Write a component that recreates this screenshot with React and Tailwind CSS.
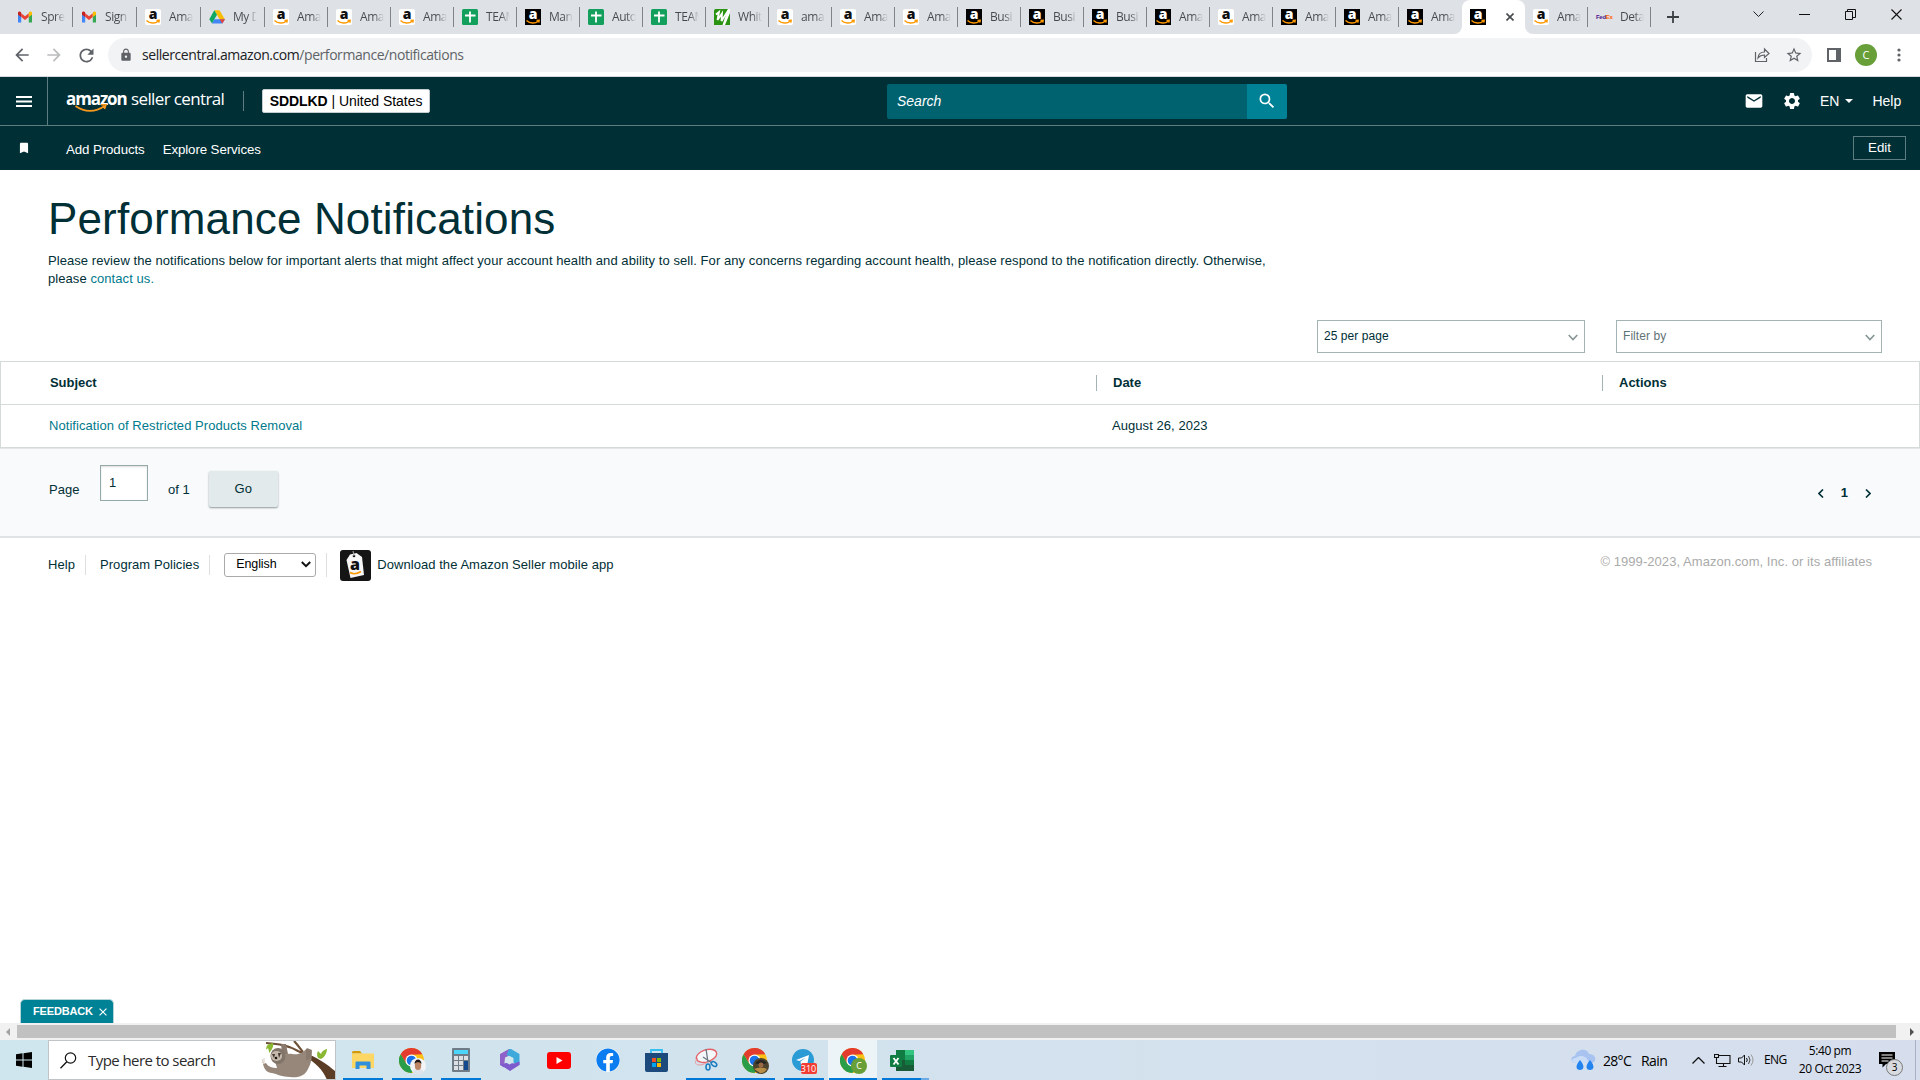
import { FaFacebook } from "react-icons/fa";
import { MdEmail, MdSettings, MdSearch, MdBookmark, MdLock, MdArrowBack, MdArrowForward, MdRefresh, MdStarBorder } from "react-icons/md";

const tabs = [
  { icon: "gmail", title: "Spre", w: "w-16" },
  { icon: "gmail", title: "Sign", w: "w-16" },
  { icon: "amazon", title: "Ama", w: "w-16" },
  { icon: "drive", title: "My D", w: "w-16" },
  { icon: "amazon", title: "Ama" },
  { icon: "amazon", title: "Ama" },
  { icon: "amazon", title: "Ama" },
  { icon: "sheets", title: "TEAM" },
  { icon: "seller", title: "Man" },
  { icon: "sheets", title: "Auto" },
  { icon: "sheets", title: "TEAM" },
  { icon: "white", title: "Whit" },
  { icon: "amazon", title: "ama" },
  { icon: "amazon", title: "Ama" },
  { icon: "amazon", title: "Ama" },
  { icon: "seller", title: "Busi" },
  { icon: "seller", title: "Busi" },
  { icon: "seller", title: "Busi" },
  { icon: "seller", title: "Ama" },
  { icon: "amazon", title: "Ama" },
  { icon: "seller", title: "Ama" },
  { icon: "seller", title: "Ama" },
  { icon: "seller", title: "Ama", last: true },
  { icon: "seller", active: true },
  { icon: "amazon", title: "Ama" },
  { icon: "fedex", title: "Deta" },
];

const Favicon = ({ name }) => {
  if (name === "gmail") {
    return (
      <svg className="size-4 shrink-0" viewBox="0 0 16 16">
        <path d="M1 4v9.500h3.200V7z" fill="#4285f4" />
        <path d="M15 4v9.500h-3.200V7z" fill="#34a853" />
        <path d="M4.200 4.200 8 7.200l3.800-3v3.900L8 11 4.200 8.100z" fill="#ea4335" />
        <path d="M1 4c0-1.500 1.800-2 3.200-.6v4.700L1 5.700z" fill="#c5221f" />
        <path d="M15 4c0-1.500-1.800-2-3.200-.6v4.700L15 5.700z" fill="#fbbc04" />
      </svg>
    );
  }
  if (name === "drive") {
    return (
      <svg className="size-4 shrink-0" viewBox="0 0 16 16">
        <path d="M5.300 1.300h5.200L16 10.500h-5.300z" fill="#fbbc04" />
        <path d="M5.300 1.300 8 5.800 3 14.500.3 10.300z" fill="#11a861" />
        <path d="M5.400 10.300H16l-2.700 4.300H3z" fill="#4285f4" />
        <path d="M10.700 10.300H16l-2.700 4.300z" fill="#ea4335" />
      </svg>
    );
  }
  if (name === "sheets") {
    return (
      <svg className="size-4 shrink-0" viewBox="0 0 16 16">
        <rect width="16" height="16" rx="1.500" fill="#12a05c" />
        <path d="M8 2.500v11M3 6.500h10.500" stroke="#fff" strokeWidth="1.800" />
      </svg>
    );
  }
  if (name === "white") {
    return (
      <svg className="size-4 shrink-0" viewBox="0 0 16 16">
        <rect width="16" height="16" rx="1" fill="#fff" />
        <path d="M0 1.500Q0 0 1.500 0H14l-2 5.500L8.500 16H0z" fill="#2a9412" />
        <path d="M2 5.500 5 3 3.500 11 8 4.500 7.500 12 14.500 1" fill="none" stroke="#fff" strokeWidth="1.800" />
        <path d="M16 4v12h-5z" fill="#2a9412" />
      </svg>
    );
  }
  if (name === "fedex") {
    return (
      <span className="flex w-4 shrink-0 font-['Liberation_Sans'] text-[6px] leading-4 font-bold tracking-[-0.3px]">
        <span className="text-[#4d148c]">Fed</span>
        <span className="text-[#ff6200]">Ex</span>
      </span>
    );
  }
  const dark = name === "seller";
  return (
    <svg className="size-4 shrink-0" viewBox="0 0 16 16">
      <rect width="16" height="16" rx={dark ? 0 : 2} fill={dark ? "#000" : "#fff"} />
      <text x="8" y="10.200" textAnchor="middle" fontFamily="Open Sans, sans-serif" fontWeight="800" fontSize="14" fill={dark ? "#fff" : "#111"}>a</text>
      <path d="M1.500 11.500c3.500 3.200 8.700 3.200 11.700.8M11.500 11.500l2.700-.3-.4 2.500" fill="none" stroke="#f90" strokeWidth="1.400" />
    </svg>
  );
};

const Tab = ({ tab }) => {
  if (tab.active) {
    return (
      <div className="relative flex h-[34px] w-[63px] items-center rounded-t-lg bg-white pl-2">
        <svg className="absolute bottom-0 -left-2 size-2" viewBox="0 0 8 8"><path d="M8 0v8H0a8 8 0 0 0 8-8" fill="#fff" /></svg>
        <svg className="absolute -right-2 bottom-0 size-2" viewBox="0 0 8 8"><path d="M0 0v8h8a8 8 0 0 1-8-8" fill="#fff" /></svg>
        <Favicon name={tab.icon} />
        <svg className="ml-5 size-2" viewBox="0 0 8 8"><path d="m.5.5 7 7m0-7-7 7" stroke="#45494d" strokeWidth="1.600" /></svg>
      </div>
    );
  }
  return (
    <div className={`flex h-[34px] items-center pl-2 ${tab.w || "w-[63px]"}`}>
      <Favicon name={tab.icon} />
      <span className="ml-2 w-[24px] shrink-0 overflow-hidden bg-gradient-to-r from-[#45494d] from-60% to-transparent bg-clip-text text-[12px] leading-[18px] tracking-[-0.45px] whitespace-nowrap text-transparent">{tab.title}</span>
      <span className={`ml-auto h-5 w-px shrink-0 ${tab.last ? "" : "bg-[#808387]"}`} />
    </div>
  );
};

const TabStrip = () => (
  <div className="flex h-[34px] bg-[#dee1e6] pl-[9px] font-['Open_Sans',sans-serif]">
    {tabs.map((tab, i) => <Tab key={i} tab={tab} />)}
    <svg className="mt-[11px] ml-4 size-3" viewBox="0 0 12 12"><path d="M6 0v12M0 6h12" stroke="#3c4043" strokeWidth="1.800" /></svg>
    <div className="mr-[18px] ml-auto flex gap-[35px] pt-[9px]">
      <svg className="size-[11px]" viewBox="0 0 11 11"><path d="m.5 2.500 5 5 5-5" fill="none" stroke="#222" /></svg>
      <svg className="size-[11px]" viewBox="0 0 11 11"><path d="M0 5.500h11" stroke="#111" /></svg>
      <svg className="size-[11px]" viewBox="0 0 11 11"><path d="M.5 2.500h7v8h-7zM2.500 2.500v-2h8v8h-3" fill="none" stroke="#111" /></svg>
      <svg className="size-[11px]" viewBox="0 0 11 11"><path d="m.5.500 10 10m0-10-10 10" stroke="#111" strokeWidth="1.100" /></svg>
    </div>
  </div>
);

const AddressBar = () => (
  <div className="flex h-[43px] items-center border-b border-[#d5d8dc] bg-white pl-[12px] font-['Open_Sans',sans-serif] text-[#5f6368]">
    <MdArrowBack className="size-5" />
    <MdArrowForward className="ml-3 size-5 text-[#babcbe]" />
    <MdRefresh className="ml-3 size-[21px]" />
    <div className="ml-[11px] flex h-[34px] w-[1704px] items-center rounded-full bg-[#f1f3f4] pl-[11px]">
      <MdLock className="size-[14px]" />
      <span className="ml-[9px] text-[14px] leading-5 tracking-[-0.44px]"><span className="text-[#202124]">sellercentral.amazon.com</span>/performance/notifications</span>
      <svg className="mr-px ml-auto size-4" viewBox="0 0 16 16" fill="none" stroke="#5f6368" strokeWidth="1.200"><path d="M1.500 5v9.500h11V11M4 11c.3-4 3-6 6.500-6V2l4.500 4.500-4.500 4V8C7.500 8 5.500 9 4 11z" /></svg>
      <MdStarBorder className="mr-[9px] ml-[14px] size-[18px]" />
    </div>
    <svg className="ml-[15px] size-[14px]" viewBox="0 0 14 14"><path d="M1 1h12v12H1z" fill="none" stroke="#5f6368" strokeWidth="2" /><path d="M9 1h4v12H9z" fill="#5f6368" /></svg>
    <span className="ml-[14px] flex size-[22px] items-center justify-center rounded-full bg-[#689f38] text-[11px] text-white">C</span>
    <svg className="ml-5 h-[14px] w-1" viewBox="0 0 4 14" fill="#5f6368"><circle cx="2" cy="2" r="1.600" /><circle cx="2" cy="7" r="1.600" /><circle cx="2" cy="12" r="1.600" /></svg>
  </div>
);

const SellerHeader = () => (
  <header className="h-[93px] bg-[#002f36] text-white">
    <div className="flex h-[49px] items-center border-b border-[#5d7d80]">
      <div className="flex h-full w-12 items-center justify-center border-r border-[#5d7d80]">
        <svg className="h-[11px] w-4" viewBox="0 0 16 11"><path d="M0 1h16M0 5.500h16M0 10h16" stroke="#fff" strokeWidth="1.800" /></svg>
      </div>
      <div className="relative ml-[18px] flex h-5 w-[160px] -translate-y-[2px] items-center gap-[4px] font-['Open_Sans',sans-serif] text-[17px] leading-5 whitespace-nowrap">
        <span className="w-[61px] font-bold tracking-[-1.1px]">amazon</span>
        <span className="tracking-[-0.63px]">seller central</span>
        <svg className="absolute top-[15px] left-[9px] h-2 w-8" viewBox="0 0 32 8"><path d="M.5 2c9 6.500 20 6.500 29 0M26 .8l5-.2-1.500 4.400" fill="none" stroke="#f7981d" strokeWidth="1.600" /></svg>
      </div>
      <span className="ml-[17px] h-5 w-px bg-[#5d7d80]" />
      <div className="ml-[18px] flex h-6 w-[168px] items-center justify-center rounded-[2px] border border-[#c5cccd] bg-white text-[14px] tracking-[-0.05px] whitespace-pre text-black"><b>SDDLKD</b> | United States</div>
      <div className="ml-[457px] flex h-[35px] w-[400px] overflow-hidden rounded-[2px]">
        <div className="flex flex-1 items-center bg-[#00616f] pl-[10px] text-[14px] italic">Search</div>
        <div className="flex w-10 items-center justify-center bg-[#008296]"><MdSearch className="size-5" /></div>
      </div>
      <MdEmail className="ml-[457px] size-5" />
      <MdSettings className="ml-[18px] size-5" />
      <span className="ml-[18px] text-[14px]">EN</span>
      <span className="ml-[6px] border-x-4 border-t-4 border-x-transparent border-t-white" />
      <span className="ml-[19px] text-[14px]">Help</span>
    </div>
    <div className="flex h-[44px] items-center pr-[14px] text-[13.300px] tracking-[-0.1px]">
      <MdBookmark className="ml-[17px] size-[14px]" />
      <span className="mt-[3px] ml-[35px]">Add Products</span>
      <span className="mt-[3px] ml-[18px]">Explore Services</span>
      <span className="ml-auto flex h-6 w-[53px] items-center justify-center border border-[#5d7d80] tracking-normal">Edit</span>
    </div>
  </header>
);

const Dropdown = ({ label, className }) => (
  <div className={`flex h-[33px] items-center justify-between border border-[#a3b3b3] px-[6px] pb-[2px] text-[12px] tracking-[0.06px] ${className}`}>
    {label}
    <svg className="mt-1 h-[7px] w-[10px]" viewBox="0 0 10 7"><path d="m.7 1 4.300 4.500L9.300 1" fill="none" stroke="#879596" strokeWidth="1.600" /></svg>
  </div>
);

const NotificationsTable = () => (
  <div className="border border-[#d5dbdb] text-[13px]">
    <div className="grid h-[43px] grid-cols-[1095px_506px_1fr] items-center border-b border-[#d5dbdb] font-bold">
      <span className="pl-[49px] tracking-[-0.05px]">Subject</span>
      <span className="flex h-4 items-center border-l border-[#a3b3b3] pl-4">Date</span>
      <span className="flex h-4 items-center border-l border-[#a3b3b3] pl-4">Actions</span>
    </div>
    <div className="grid h-[42px] grid-cols-[1095px_506px_1fr] items-center tracking-[0.06px]">
      <span className="pl-12 text-[#007a8c]">Notification of Restricted Products Removal</span>
      <span className="pl-4">August 26, 2023</span>
    </div>
  </div>
);

const Pagination = () => (
  <div className="flex h-[90px] items-start border-t border-b-2 border-t-[#e3e7ea] border-b-[#dfe3e6] bg-[#f9fafc] pl-[49px] text-[13px]">
    <span className="mt-[31px] w-[51px]">Page</span>
    <div className="mt-4 h-9 w-12 border border-[#95a9a9] bg-white pt-[7px] pl-2 shadow-[inset_0_1px_2px_#ddd]">1</div>
    <span className="mt-[31px] ml-5">of 1</span>
    <div className="mt-[22px] ml-[19px] flex h-9 w-[69px] items-center justify-center rounded-[2px] bg-[#e2eaeb] shadow-[0_1px_2px_#8d9999]">Go</div>
    <div className="mt-[36px] mr-[49px] ml-auto flex items-center gap-[17px] leading-4 font-bold">
      <svg className="h-[9px] w-[6px]" viewBox="0 0 6 9"><path d="M5 .5 1 4.500l4 4" fill="none" stroke="#002f36" strokeWidth="1.600" /></svg>
      <span>1</span>
      <svg className="h-[9px] w-[6px]" viewBox="0 0 6 9"><path d="m1 .5 4 4-4 4" fill="none" stroke="#002f36" strokeWidth="1.600" /></svg>
    </div>
  </div>
);

const Footer = () => (
  <footer className="flex h-[53px] items-center pl-12 text-[13px] tracking-[0.06px]">
    <span>Help</span>
    <span className="ml-[10px] h-5 w-px bg-[#dddfe0]" />
    <span className="ml-[14px]">Program Policies</span>
    <span className="ml-[10px] h-5 w-px bg-[#dddfe0]" />
    <div className="ml-[14px] flex h-6 w-[92px] items-center justify-between rounded-[3px] border border-[#aaa] pr-1 pl-[11px] text-[12.500px] tracking-[-0.1px] text-black">
      English
      <svg className="h-[7px] w-[10px]" viewBox="0 0 10 7"><path d="m.8 1 4.200 4.200L9.200 1" fill="none" stroke="#111" strokeWidth="2" /></svg>
    </div>
    <span className="ml-[10px] h-6 w-px bg-[#dddfe0]" />
    <svg className="mt-[2px] ml-[13px] h-[31px] w-[31px]" viewBox="0 0 31 31">
      <rect width="31" height="31" rx="3" fill="#151515" />
      <path d="M10 4.500 16.500 3 22 7l2 18-13.500 3L6.500 10z" fill="#f7f7f7" />
      <circle cx="14" cy="6" r="1.300" fill="#151515" /><path d="M14 6 13 1" stroke="#aaa" />
      <text x="15" y="20" textAnchor="middle" fontFamily="Open Sans, sans-serif" fontWeight="800" fontSize="16" fill="#111">a</text>
      <path d="M10 22.500c4 2.200 7 1.500 11-1" fill="none" stroke="#f90" strokeWidth="1.500" />
    </svg>
    <span className="ml-[6px]">Download the Amazon Seller mobile app</span>
    <span className="mr-12 ml-auto pb-[6px] text-[#aaa]">© 1999-2023, Amazon.com, Inc. or its affiliates</span>
  </footer>
);

const Chrome = ({ children }) => (
  <div className="relative">
    <svg className="size-[25px]" viewBox="0 0 24 24">
      <circle cx="12" cy="12" r="12" fill="#fbc116" />
      <path d="M1.600 6A12 12 0 0 1 22.400 6L12 6.500 7 15z" fill="#e33b2e" />
      <path d="M1.600 6A12 12 0 0 0 12 24l5-9H7z" fill="#2a9d48" />
      <circle cx="12" cy="12" r="5.800" fill="#fff" />
      <circle cx="12" cy="12" r="4.600" fill="#1a73e8" />
    </svg>
    {children}
  </div>
);

const TaskItem = ({ children, open, active }) => (
  <div className={`relative flex h-10 w-[49px] items-center justify-center ${active ? "bg-[#edf4f8]" : ""}`}>
    {children}
    {open && <span className={`absolute bottom-0 h-[2px] bg-[#0078d7] ${active ? "w-12" : "w-10"}`} />}
  </div>
);

const Sloth = () => (
  <svg className="ml-auto h-[38px] w-[74px]" viewBox="0 0 74 38">
    <path d="M5 2c12 1 22 2 32 8 12 5 18 10 24 15M33 0c3 3 5 6 9 11" fill="none" stroke="#6f5138" strokeWidth="2.200" />
    <path d="M43 12c12 3 24 12 31 18v9h-8c-4-10-11-17-23-24z" fill="#5b3d26" />
    <path d="M57 17c-2-4 0-7 0-7l3 3c1-4 6-5 6-5s0 7-6 10zM8 3 12 2c1 4-2 8-4 10 0-4-1-6-3-3 0-3 1-5 3-6z" fill="#8ab833" />
    <path d="M14 20c4-4 8-8 17-7 7 1 11-1 15-6l5 2c0 8-1 14-4 19-3 7-10 9-18 8-8 0-13-3-18-4-5 0-8-4-9-9l3-1c2 4 7 5 11 5z" fill="#96877a" />
    <path d="M21 13 20 3l5 0 2 10zM45 20V8l5 1v8z" fill="#8a7a6d" />
    <ellipse cx="17" cy="15" rx="7.500" ry="8" fill="#817469" />
    <ellipse cx="15.500" cy="15" rx="5.500" ry="5" fill="#c5b9ad" />
    <path d="m11 13 3 0-1 4zm6-1 3 0-2 5z" fill="#41352e" />
    <circle cx="15" cy="17" r="1.300" fill="#1b1512" />
    <path d="m1 21 2 2M1 18l2 5m0-6 0 5" stroke="#d9d0c6" />
  </svg>
);

const Taskbar = () => (
  <div className="flex h-10 bg-gradient-to-r from-[#cfe6ee] to-[#d6deed] font-['Open_Sans',sans-serif] text-black">
    <div className="flex w-12 items-center justify-center">
      <svg className="size-4" viewBox="0 0 16 16"><path d="M0 2.200 6.500 1.300V7.500H0zM7.500 1.200 16 0v7.500H7.500zM0 8.500h6.500v6.200L0 13.800zM7.500 8.500H16V16l-8.500-1.200z" /></svg>
    </div>
    <div className="flex w-[288px] items-center border border-[#c0c4c6] bg-white pl-[11px]">
      <svg className="size-[17px]" viewBox="0 0 17 17"><circle cx="10.500" cy="6" r="5.200" fill="none" stroke="#111" strokeWidth="1.200" /><path d="M6.800 9.800.5 16.300" stroke="#111" strokeWidth="1.300" /></svg>
      <span className="ml-[11px] text-[15px] tracking-[-0.56px] whitespace-nowrap text-[#2b2b2b]">Type here to search</span>
      <Sloth />
    </div>
    <div className="ml-[2px] flex">
      <TaskItem open>
        <svg className="h-[18px] w-[22px]" viewBox="0 0 22 18"><path d="M0 1.500Q0 0 1.500 0H8l2 2.500H0z" fill="#d69a05" /><path d="M0 2.500h22V17H0z" fill="#fdd663" /><path d="M3.500 18v-6.500q0-1 1-1h13q1 0 1 1V18h-4v-3.500h-7V18z" fill="#2f8fdd" /></svg>
      </TaskItem>
      <TaskItem open>
        <Chrome>
          <svg className="absolute top-[10px] left-[11px] size-4" viewBox="0 0 16 16"><circle cx="8" cy="8" r="8" fill="#f3f4f6" /><path d="M2.500 14C3 11 6 11 8 11s5 0 5.500 3A8 8 0 0 1 2.500 14" fill="#dfe3ea" /><ellipse cx="8" cy="7.500" rx="3.200" ry="4.500" fill="#bd8563" /><path d="M4.500 6c0-6 7-6 7 0C10 3.500 6 3.500 4.500 6" fill="#1c1716" /></svg>
        </Chrome>
      </TaskItem>
      <TaskItem open>
        <svg className="h-[24px] w-[18px]" viewBox="0 0 18 24"><rect width="18" height="24" rx="1" fill="#6f7b86" /><path d="M2 2h14v4H2z" fill="#4cd5fb" /><path d="M2 8h4v4H2zM7 8h4v4H7zM12 8h4v4h-4zM2 13h4v4H2zM7 13h4v4H7zM2 18h4v4H2zM7 18h4v4H7z" fill="#dce0e4" /><path d="M12 13h4v9h-4z" fill="#15498f" /></svg>
      </TaskItem>
      <TaskItem>
        <svg className="h-[22px] w-[21px]" viewBox="0 0 21 22"><path d="M10 0 1 5v11l4 2.500 1-10 7-3V1z" fill="#8f62c9" /><path d="M10 0h2l8.500 5v11l-6-2V9l-7-3z" fill="#3fa9dc" /><path d="m1 15.500 8-2 6 1 5.500-2V16L11 22z" fill="#7d5bcd" /><path d="m10.500 7 3.500 2v4.500l-3.500 2-3.500-2V9z" fill="#d0e6ee" /></svg>
      </TaskItem>
      <TaskItem>
        <svg className="h-[17px] w-6" viewBox="0 0 24 17"><rect width="24" height="17" rx="3" fill="#f00" /><path d="m9.500 5 6 3.500-6 3.500z" fill="#fff" /></svg>
      </TaskItem>
      <TaskItem>
        <div className="rounded-full bg-white"><FaFacebook className="size-6 text-[#0b7df0]" /></div>
      </TaskItem>
      <TaskItem>
        <svg className="h-[23px] w-[23px]" viewBox="0 0 23 23"><path d="M6 6V1h11v5" fill="none" stroke="#35bff0" strokeWidth="1.800" /><path d="M0 4h23v17q0 2-2 2H2q-2 0-2-2z" fill="#1c4a7d" /><path d="M7 9h4v4H7z" fill="#f25022" /><path d="M12 9h4v4h-4z" fill="#7fba00" /><path d="M7 14h4v4H7z" fill="#00a4ef" /><path d="M12 14h4v4h-4z" fill="#ffb900" /></svg>
      </TaskItem>
      <TaskItem open>
        <svg className="size-6" viewBox="0 0 24 24" fill="none"><ellipse cx="12.500" cy="8" rx="10.500" ry="6" transform="rotate(-18 12 8)" fill="#f4f7fa" stroke="#e5636a" strokeWidth="1.400" /><path d="M4 10c-4 3-3 7 1 7 4 0 8-2 10-4" stroke="#e99aa0" /><path d="m12 1 2 13M9 9l9 6" stroke="#6b7782" strokeWidth="1.300" /><ellipse cx="14" cy="19" rx="2" ry="3" stroke="#1c7dc0" strokeWidth="1.600" /><ellipse cx="20" cy="16" rx="3" ry="2" transform="rotate(35 20 16)" stroke="#1c7dc0" strokeWidth="1.600" /></svg>
      </TaskItem>
      <TaskItem open>
        <Chrome>
          <svg className="absolute top-[10px] left-[11px] size-4" viewBox="0 0 16 16"><circle cx="8" cy="8" r="8" fill="#4c432e" /><path d="M2 5q6-6 12 0l-3 1H4z" fill="#252622" /><circle cx="8" cy="7" r="2.500" fill="#9c6945" /><path d="M1 11q6-3 13 0-3 5-7 4z" fill="#b68e46" /></svg>
        </Chrome>
      </TaskItem>
      <TaskItem open>
        <div className="relative mr-[2px]">
          <svg className="size-[22px]" viewBox="0 0 22 22"><circle cx="11" cy="11" r="11" fill="#2a9bd5" /><path d="m4 11 13-5-2 11-4-3-2 2-.5-3.500L14 8.500 7.500 12z" fill="#fff" /></svg>
          <span className="absolute top-[14px] left-[9px] h-[11px] w-4 rounded-[2px] bg-[#f23b32] text-center text-[9px] leading-[11px] text-white">310</span>
        </div>
      </TaskItem>
      <TaskItem open active>
        <Chrome>
          <span className="absolute top-[10px] left-[11px] flex size-4 items-center justify-center rounded-full bg-[#689f38] text-[9px] text-white">C</span>
        </Chrome>
      </TaskItem>
      <div className="relative">
        <TaskItem open>
          <svg className="h-[21px] w-6" viewBox="0 0 24 21"><path d="M6 0h18v21H6z" fill="#21a366" /><path d="M6 0h9v10H6z" fill="#107c41" /><path d="M15 0h9v5h-9z" fill="#33c481" /><path d="M6 10h18v11H6z" fill="#185c37" /><path d="M15 10h9v5h-9z" fill="#107c41" /><rect y="5" width="12" height="12" rx="1" fill="#107c41" /><path d="m3.500 8 5 6.500m0-6.500-5 6.500" stroke="#fff" strokeWidth="1.800" /></svg>
        </TaskItem>
        <span className="absolute right-[-3px] bottom-0 h-[2px] w-2 bg-[#6cabe5]" />
      </div>
    </div>
    <div className="mr-[4px] ml-auto flex items-center">
      <svg className="h-[22px] w-[25px]" viewBox="0 0 25 22"><path d="M5 14C-1 14-1 7 4 7 5 0 16-2 18 5c8 0 8 9 2 9z" fill="#a8c3f0" /><path d="M5 14C0 14 0 9 5 9c5-4 10-1 11 1l3 4z" fill="#cbdcf7" /><path d="M9 11c-6 7-3 10 0 10s6-3 0-10M19 11c-6 7-3 10 0 10s6-3 0-10" fill="#2384ef" /></svg>
      <span className="ml-[7px] w-[38px] text-[14px] tracking-[-0.7px]">28°C</span>
      <span className="w-[51px] text-[14px] tracking-[-0.6px]">Rain</span>
      <svg className="h-[7px] w-[13px]" viewBox="0 0 13 7"><path d="m.5 6.500 6-6 6 6" fill="none" stroke="#111" strokeWidth="1.300" /></svg>
      <svg className="ml-[9px] h-[14px] w-[17px]" viewBox="0 0 17 14"><path d="M5 2.500h11v8H5M4.500 13.500h8M9.500 10.500v3M.5 1.500h4v3h-4zM2.500 4.500v6H5" fill="none" stroke="#111" strokeWidth="1.100" /></svg>
      <svg className="ml-[7px] h-[14px] w-[17px]" viewBox="0 0 17 14" fill="none" stroke="#111"><path d="M.5 5h3l3-3v10l-3-3h-3zM8.500 5q1.500 2 0 4" /><path d="M10.500 3q3 4 0 8" stroke="#444" /><path d="M13 1.500q4 5.500 0 11" stroke="#999" /></svg>
      <span className="ml-[9px] w-[28px] text-[12px] tracking-[-0.6px]">ENG</span>
      <div className="ml-[6px] flex w-[64px] flex-col items-center text-[12px] leading-[18px] tracking-[-0.4px] whitespace-nowrap">
        <span>5:40 pm</span>
        <span>20 Oct 2023</span>
      </div>
      <div className="relative ml-[17px] w-6">
        <svg className="h-4 w-4" viewBox="0 0 16 16"><path d="M0 0h16v12H7l-3.500 3.500V12H0z" /><path d="M2.500 3h11M2.500 6h11M2.500 9h7" stroke="#fff" /></svg>
        <span className="absolute top-[7px] left-[7px] flex size-[17px] items-center justify-center rounded-full border border-[#777] bg-[#d8dce0] text-[10px]">3</span>
      </div>
      <span className="ml-3 h-10 w-px bg-[#a8b2c4]" />
    </div>
  </div>
);

export default function App() {
  return (
    <div className="flex h-[1080px] w-[1920px] flex-col overflow-hidden bg-white font-['Liberation_Sans',sans-serif] text-[#002f36]">
      <TabStrip />
      <AddressBar />
      <SellerHeader />
      <main className="flex flex-1 flex-col">
        <h1 className="mt-[22px] pl-12 text-[44px] leading-[54px] tracking-[0.15px]">Performance Notifications</h1>
        <p className="mt-[6px] ml-12 w-[1230px] text-[13px] leading-[18px] tracking-[0.07px]">
          Please review the notifications below for important alerts that might affect your account health and ability to sell. For any concerns regarding account health, please respond to the notification directly. Otherwise, please <span className="text-[#007a8c]">contact us.</span>
        </p>
        <div className="mt-[32px] mb-[8px] flex justify-end gap-[31px] pr-[38px]">
          <Dropdown label="25 per page" className="w-[268px]" />
          <Dropdown label="Filter by" className="w-[266px] text-[#5f7375]" />
        </div>
        <NotificationsTable />
        <Pagination />
        <Footer />
        <div className="mt-auto ml-5 flex h-6 w-[94px] items-center rounded-t-[5px] border border-b-0 border-[#b5d5d9] bg-[#008296] pl-3 text-[11px] font-bold tracking-[-0.15px] text-white">
          FEEDBACK
          <svg className="ml-[6px] size-[8px]" viewBox="0 0 7 7"><path d="m.5.500 6 6m0-6-6 6" stroke="#fff" /></svg>
        </div>
      </main>
      <div className="flex h-[17px] items-center bg-[#f1f1f1]">
        <span className="ml-[6px] border-y-[4px] border-r-[4px] border-y-transparent border-r-[#a3a3a3]" />
        <span className="ml-[7px] h-[13px] w-[1879px] bg-[#c1c1c1]" />
        <span className="ml-[14px] border-y-[4px] border-l-[4px] border-y-transparent border-l-[#505050]" />
      </div>
      <Taskbar />
    </div>
  );
}
